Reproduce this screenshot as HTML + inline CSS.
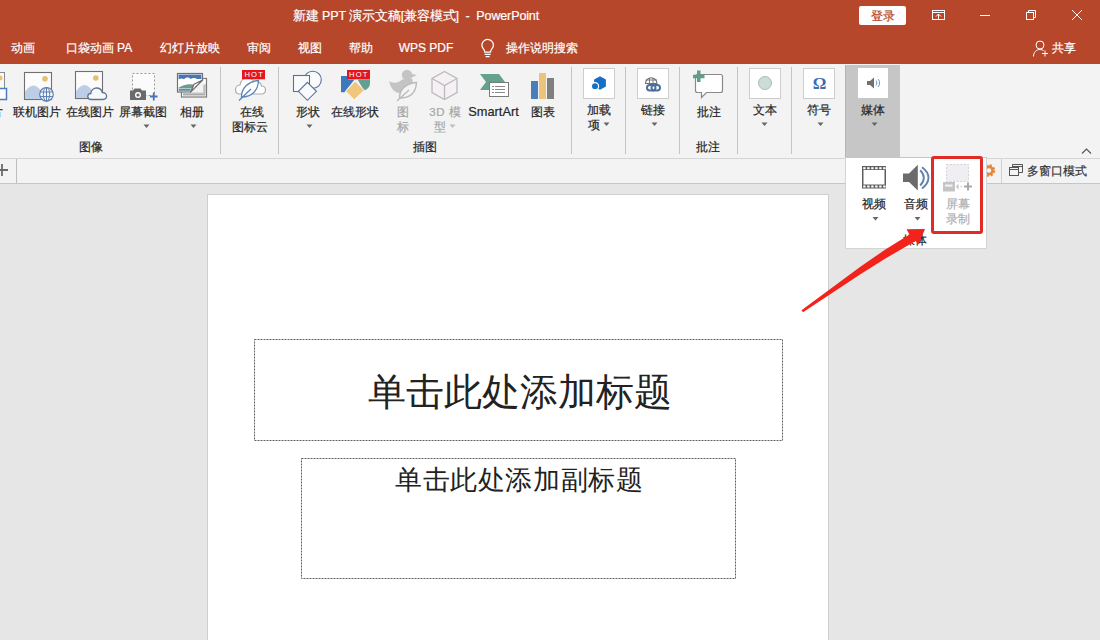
<!DOCTYPE html>
<html><head><meta charset="utf-8">
<style>
*{margin:0;padding:0;box-sizing:border-box}
html,body{width:1100px;height:640px;overflow:hidden;background:#E6E6E6;font-family:"Liberation Sans",sans-serif;position:relative}
.a{position:absolute}
.t{position:absolute;white-space:nowrap;font-size:11.5px;line-height:14px;color:#262626;text-align:center;width:100px;-webkit-text-stroke:0.2px currentColor}
.w{color:#fff}
.g{color:#A6A6A6}
.sep{position:absolute;width:1px;background:#C4C4C4;top:67px;height:87px}
.arr{position:absolute;width:0;height:0;border-left:3.5px solid transparent;border-right:3.5px solid transparent;border-top:4px solid #555}
.box{position:absolute;background:#fff;border:1px solid #CDCDCD}
</style></head><body>

<!-- title bar + tabs -->
<div class="a" style="left:0;top:0;width:1100px;height:64px;background:#B7472A"></div>
<div class="t w" style="left:266px;top:8px;width:300px;font-size:12.5px;line-height:16px;letter-spacing:-0.12px">新建 PPT 演示文稿[兼容模式]&nbsp; - &nbsp;PowerPoint</div>

<!-- login + window buttons -->
<div class="a" style="left:859px;top:6px;width:47px;height:19px;background:#fff;border-radius:2px"></div>
<div class="t" style="left:833px;top:8px;color:#B7472A;font-size:12px;line-height:16px">登录</div>
<svg class="a" style="left:0;top:0" width="1100" height="64">
 <g fill="none" stroke="#fff" stroke-width="1">
  <rect x="932.5" y="10.5" width="12" height="9"/>
  <path d="M932.5 12.5h12M936 16.5l2.5-2.5 2.5 2.5M938.5 14v5"/>
  <path d="M980 15.5h10"/>
  <rect x="1026.5" y="12.5" width="7" height="7"/>
  <path d="M1028.5 12.5v-2h7v7h-2"/>
  <path d="M1072 10l10 10M1082 10l-10 10"/>
  <circle cx="1040" cy="45" r="4"/>
  <path d="M1033.5 56.5c0-4.5 3-7 6.5-7 1.5 0 2.5.4 3.5 1"/>
  <path d="M1042 53.5h6M1045 50.5v6"/>
  <path d="M484.8 52c0-2.5-2.9-3.8-2.9-6.8a5.75 5.75 0 0 1 11.5 0c0 3-2.9 4.3-2.9 6.8z" stroke-width="1.25"/><path d="M484.6 54.3h6M485.6 56.6h4" stroke-width="1.2"/>
 </g>
</svg>
<div class="t w" style="left:1014px;top:40px;font-size:12px;line-height:16px">共享</div>
<!-- tabs -->
<div class="t w" style="left:-27px;top:40px;font-size:12px;line-height:16px">动画</div>
<div class="t w" style="left:49px;top:40px;font-size:12px;line-height:16px">口袋动画 PA</div>
<div class="t w" style="left:140px;top:40px;font-size:12px;line-height:16px">幻灯片放映</div>
<div class="t w" style="left:209px;top:40px;font-size:12px;line-height:16px">审阅</div>
<div class="t w" style="left:260px;top:40px;font-size:12px;line-height:16px">视图</div>
<div class="t w" style="left:311px;top:40px;font-size:12px;line-height:16px">帮助</div>
<div class="t w" style="left:376px;top:40px;font-size:12px;line-height:16px">WPS PDF</div>
<div class="t w" style="left:492px;top:40px;font-size:12px;line-height:16px">操作说明搜索</div>

<!-- ribbon -->
<div class="a" style="left:0;top:64px;width:1100px;height:94px;background:#F3F3F3"></div>
<div class="a" style="left:0;top:158px;width:1100px;height:1px;background:#D5D5D5"></div>
<!-- media highlight -->
<div class="a" style="left:845px;top:65px;width:55px;height:92px;background:#C6C6C6;border-left:1px solid #B4B4B4"></div>
<!-- separators -->
<div class="sep" style="left:220px"></div>
<div class="sep" style="left:278px"></div>
<div class="sep" style="left:571px"></div>
<div class="sep" style="left:625px"></div>
<div class="sep" style="left:679px"></div>
<div class="sep" style="left:737px"></div>
<div class="sep" style="left:791px"></div>
<!-- white boxes -->
<div class="box" style="left:583px;top:68px;width:32px;height:31px"></div>
<div class="box" style="left:637px;top:68px;width:32px;height:31px"></div>
<div class="box" style="left:749px;top:68px;width:32px;height:31px"></div>
<div class="box" style="left:803px;top:68px;width:32px;height:31px"></div>
<div class="box" style="left:858px;top:68px;width:30px;height:30px;border-color:#fff"></div>

<!-- ribbon icons -->
<svg class="a" style="left:0;top:64px" width="1100" height="94" viewBox="0 64 1100 94">
 <!-- partial picture icon -->
 <rect x="-20.5" y="72.5" width="25" height="18" fill="#FAFAFA" stroke="#8C8C8C"/>
 <circle cx="0" cy="78" r="2.5" fill="#E8C27A"/>
 <rect x="-8.5" y="88.5" width="15" height="11" fill="#fff" stroke="#4A7EBB" stroke-width="1.5"/>
 <!-- online picture (globe) -->
 <rect x="24.5" y="72.5" width="27" height="27" fill="#FBFBFB" stroke="#707070" stroke-width="1.1"/>
 <circle cx="45" cy="78.8" r="2.8" fill="#E5BE73"/>
 <path d="M25 99v-7c2-3.5 5.5-6.5 8.5-6.5 3 0 6 3 8.5 6.5l2 7z" fill="#BCCDE5"/>
 <circle cx="46.5" cy="94.3" r="6.8" fill="#F4F8FC" stroke="#5A7DB0" stroke-width="1.2"/>
 <path d="M40 92h13M40 96.6h13M46.5 87.5v13.6" fill="none" stroke="#5A7DB0" stroke-width="1"/>
 <ellipse cx="46.5" cy="94.3" rx="3.2" ry="6.8" fill="none" stroke="#5A7DB0" stroke-width="1"/>
 <!-- online picture (cloud) -->
 <rect x="75.5" y="71.5" width="27" height="27" fill="#FBFBFB" stroke="#707070" stroke-width="1.1"/>
 <circle cx="95.8" cy="78" r="2.8" fill="#E5BE73"/>
 <path d="M76 98v-6.5c2-3.5 5.5-6.5 8.5-6.5 3 0 6 3 8.5 6.5l2 6.5z" fill="#BCCDE5"/>
 <path d="M91 99.5c-2 0-3.2-1.3-3.2-3 0-1.8 1.4-3 3-3 .3-3.2 2.8-5.5 5.8-5.5 2.8 0 5 1.8 5.7 4.5 2.3 0 4.3 1.6 4.3 3.6 0 2-1.6 3.4-3.6 3.4z" fill="#F5F9FC" stroke="#5F7590" stroke-width="1.3"/>
 <!-- screenshot -->
 <rect x="132.5" y="73.5" width="22" height="22" fill="#FBFBFB" stroke="#9A9A9A" stroke-dasharray="2 2"/>
 <path d="M130 90.5h3l1.5-2h6l1.5 2h4v9.5h-16z" fill="#6B6B6B"/>
 <circle cx="138" cy="95" r="3" fill="#fff"/><circle cx="138" cy="95" r="1.6" fill="#6B6B6B"/>
 <path d="M150 96.5h7.5M153.75 92.5v8" stroke="#4A74B0" stroke-width="1.8"/>
 <!-- album -->
 <rect x="181.5" y="78.5" width="25" height="18.5" fill="#fff" stroke="#7A7A7A" stroke-width="1.2"/>
 <path d="M192 93L205.8 83.5V93z" fill="#BFBFBF"/>
 <rect x="183" y="93.3" width="22.5" height="2.2" fill="#A9A9A9"/>
 <rect x="177.5" y="73.5" width="25" height="18.5" fill="#fff" stroke="#707070" stroke-width="1.2"/>
 <rect x="178.6" y="74.6" width="22.8" height="4.8" fill="#4676B4"/>
 <path d="M178.6 79.5c2-1.5 4-1.5 5.5 0 1.5-2.5 5-2.5 6.5-.5 2-1.5 5-1.5 6.5 0h4.3v5h-22.8z" fill="#fff"/>
 <path d="M178.6 87.8c3.5-2.5 8-3.8 12-3.6 3 .2 6 1.2 8 2.8v1.5h-20z" fill="#6C9C8E"/>
 <rect x="178.6" y="89" width="12" height="1.8" fill="#5B8CB0"/>
 <path d="M190 92.8L203.3 79.2V92.8z" fill="#F3F3F3"/>
 <path d="M190.6 92.2L194 84.3l8.6-4.3z" fill="#fff" stroke="#6A6A6A" stroke-width="1.2" stroke-linejoin="round"/>
 <!-- online icon cloud -->
 <path d="M239.5 94c-2.5 0-4-2-4-4.5s2-4.5 4.5-4.5c.5-4 3.5-7 7.5-7 3 0 5 1.5 6.5 3.5 3-1 7 1 7.5 4.5 2.5 0 4 2 4 4s-1.5 4-4 4z" fill="#fff" stroke="#ABABAB" stroke-width="1.2"/>
 <path d="M241.5 97c0-9 6.5-15.5 17-16.5-.5 10-6.5 16.5-17 16.5z" fill="#fff" stroke="#5A84BC" stroke-width="1.3"/>
 <path d="M239 100.5l12-11.5" stroke="#5A84BC" stroke-width="1.3"/>
 <rect x="242" y="70" width="23" height="9.3" fill="#E3161B"/>
 <text x="254.2" y="77.4" font-family="Liberation Sans" font-size="7.6" fill="#fff" text-anchor="middle" letter-spacing="1.2">HOT</text>
 <!-- shapes -->
 <circle cx="312.7" cy="79.8" r="8.6" fill="#F8FAFC" stroke="#56719A" stroke-width="1.1"/>
 <rect x="293.5" y="75.5" width="16" height="16" fill="#F8FAFC" stroke="#56719A" stroke-width="1.1"/>
 <path d="M307.4 82.3l9 9-9 9-9-9z" fill="#F8FAFC" stroke="#56719A" stroke-width="1.1"/>
 <!-- online shapes -->
 <path d="M341 76h7v3.5h6.5l-10 12.8h-3.5z" fill="#3D78BE"/>
 <path d="M357.5 79.5H370v4.5c-.5 3-2.5 5.5-6 6.5z" fill="#62A096"/>
 <path d="M355.2 81l9.2 9.2-10.2 9.6-8.6-8.6z" fill="#F0C57C" stroke="#fff" stroke-width="0.8"/>
 <rect x="347" y="70" width="23" height="9.3" fill="#E3161B"/>
 <text x="358.8" y="77.4" font-family="Liberation Sans" font-size="7.6" fill="#fff" text-anchor="middle" letter-spacing="1.2">HOT</text>
 <!-- icons (disabled) -->
 <circle cx="407" cy="75" r="5.2" fill="#C4C4C4"/>
 <path d="M410 73.5l7 1.5-6 3z" fill="#C4C4C4"/>
 <path d="M389 81c3 2.5 9 2.5 13-1.5l10-1c2.5 6 0 14-9 15-8 .5-12.5-5-14-12.5z" fill="#C4C4C4"/>
 <path d="M399.5 98c0-8.5 6-14.5 17-15.5-.5 10-6 15.5-17 15.5z" fill="#F4F4F4" stroke="#BBBBBB" stroke-width="1.4"/>
 <path d="M397 101l12-11" stroke="#BBBBBB" stroke-width="1.3"/>
 <!-- 3D model (disabled) -->
 <path d="M444.5 71.5l12.5 7v14l-12.5 7-12.5-7v-14z" fill="#F4F0F4" stroke="#BBBBBB" stroke-width="1.3"/>
 <path d="M432 78.5l12.5 7 12.5-7M444.5 85.5v14" fill="none" stroke="#BBBBBB" stroke-width="1.3"/>
 <!-- smartart -->
 <path d="M480 74h19l6 8-6 8h-19l6-8z" fill="#64A28F"/>
 <rect x="489.5" y="82.5" width="19" height="14" fill="#fff" stroke="#7A7A7A"/>
 <path d="M492 86.5h2M495 86.5h10M492 89.5h2M495 89.5h10M492 92.5h2M495 92.5h10" stroke="#8A8A8A"/>
 <!-- chart -->
 <rect x="531" y="81" width="7" height="18" fill="#4A7EBB"/>
 <rect x="539" y="73" width="7" height="26" fill="#EBC47C"/>
 <rect x="547" y="78" width="7" height="21" fill="#7F7F7F"/>
 <!-- addins -->
 <path d="M600 76.2l5.9 3.4v6.8l-5.9 3.4-5.9-3.4v-6.8z" fill="#1570C8"/>
 <circle cx="595" cy="86.2" r="3.6" fill="#1570C8" stroke="#fff" stroke-width="1.2"/>
 <!-- link -->
 <path d="M645.5 83.5a5.75 5.75 0 0 1 11.5 0z" fill="none" stroke="#6E6E6E" stroke-width="1.1"/>
 <path d="M645.5 80h11.5M649.5 78v5.5M653 78v5.5" fill="none" stroke="#6E6E6E" stroke-width="0.9"/>
 <rect x="647" y="85" width="8.5" height="5.5" rx="2.75" fill="none" stroke="#4D6F9C" stroke-width="2"/>
 <rect x="651.5" y="85" width="8.5" height="5.5" rx="2.75" fill="none" stroke="#4D6F9C" stroke-width="2"/>
 <!-- comment -->
 <path d="M697.5 74.5h23a2 2 0 0 1 2 2v14a2 2 0 0 1-2 2h-14l-5 5v-5h-4a2 2 0 0 1-2-2v-14a2 2 0 0 1 2-2z" fill="#fff" stroke="#8A8A8A" stroke-width="1.2"/>
 <path d="M693 76.5h11.5M698.75 70.5v11.5" stroke="#5E9E8C" stroke-width="3.5"/>
 <!-- text -->
 <circle cx="765" cy="83" r="6.5" fill="#CBDDD6" stroke="#A7BFB6" stroke-width="1"/>
 <!-- symbol -->
 <text x="819.5" y="89" font-family="Liberation Serif" font-weight="bold" font-size="17" fill="#3E6DAF" text-anchor="middle">Ω</text>
 <!-- media speaker -->
 <path d="M867 81h3l4-3.5v11l-4-3.5h-3z" fill="#6F6F6F"/>
 <path d="M876 80.5c1 1 1 4 0 5M878 79c2 2 2 6 0 8" fill="none" stroke="#5A84BC" stroke-width="0.9"/>
 <!-- dropdown arrows -->
 <g fill="#666">
  <path d="M143.5 124.5h6l-3 3.5z"/>
  <path d="M190.5 124.5h6l-3 3.5z"/>
  <path d="M306.5 124.5h6l-3 3.5z"/>
  <path d="M603.5 122.5h6l-3 3.5z"/>
  <path d="M651.5 122.5h6l-3 3.5z"/>
  <path d="M761.5 122.5h6l-3 3.5z"/>
  <path d="M817.5 122.5h6l-3 3.5z"/>
  <path d="M871.5 122.5h6l-3 3.5z"/>
 </g>
 <path d="M449.5 124.5h6l-3 3.5z" fill="#BDBDBD"/>
 <path d="M1082 153.5l4.5-4.5 4.5 4.5" fill="none" stroke="#555" stroke-width="1.1"/>
</svg>

<!-- ribbon labels -->
<div class="t" style="left:-59px;top:105px">图片</div>
<div class="t" style="left:-13px;top:105px">联机图片</div>
<div class="t" style="left:40px;top:105px">在线图片</div>
<div class="t" style="left:93px;top:105px">屏幕截图</div>
<div class="t" style="left:142px;top:105px">相册</div>
<div class="t" style="left:41px;top:140px">图像</div>
<div class="t" style="left:202px;top:105px">在线</div>
<div class="t" style="left:200px;top:120px">图标云</div>
<div class="t" style="left:258px;top:105px">形状</div>
<div class="t" style="left:305px;top:105px">在线形状</div>
<div class="t g" style="left:353px;top:105px">图</div>
<div class="t g" style="left:353px;top:120px">标</div>
<div class="t g" style="left:395.5px;top:105px;letter-spacing:0.6px">3D 模</div>
<div class="t g" style="left:390px;top:120px">型</div>
<div class="t" style="left:443.5px;top:104.5px;font-size:12.8px">SmartArt</div>
<div class="t" style="left:493px;top:105px">图表</div>
<div class="t" style="left:375px;top:140px">插图</div>
<div class="t" style="left:549px;top:103px">加载</div>
<div class="t" style="left:544px;top:118px">项</div>
<div class="t" style="left:603px;top:103px">链接</div>
<div class="t" style="left:659px;top:105px">批注</div>
<div class="t" style="left:658px;top:140px">批注</div>
<div class="t" style="left:715px;top:103px">文本</div>
<div class="t" style="left:769px;top:103px">符号</div>
<div class="t" style="left:823px;top:103px">媒体</div>
<!-- toolbar strip -->
<div class="a" style="left:0;top:159px;width:1100px;height:24px;background:#F3F3F3"></div>
<div class="a" style="left:0;top:183px;width:1100px;height:1px;background:#C6C6C6"></div>

<!-- toolbar strip items -->
<svg class="a" style="left:0;top:158px" width="1100" height="26" viewBox="0 158 1100 26">
 <path d="M-4 170h12M2 164v12" stroke="#6A6A6A" stroke-width="1.8"/>
 <path d="M16.5 159v24" stroke="#BDBDBD"/>
 <path d="M1001.5 159v24" stroke="#D0D0D0"/>
 <g fill="none" stroke="#555" stroke-width="1">
  <rect x="1009.5" y="167.5" width="9" height="8"/>
  <path d="M1009.5 169.5h9M1012.5 167.5v-3h10v8h-4M1012.5 166.5h10"/>
 </g>
 <circle cx="989" cy="170.5" r="3.6" fill="none" stroke="#E3873A" stroke-width="2.6"/><circle cx="989" cy="170.5" r="5.3" fill="none" stroke="#E3873A" stroke-width="2" stroke-dasharray="2.2 1.96"/>
</svg>
<div class="t" style="left:1017px;top:163px;width:80px;font-size:12px;line-height:16px;color:#333">多窗口模式</div>

<!-- slide -->
<div class="a" style="left:207px;top:194px;width:622px;height:460px;background:#fff;border:1px solid #CFCFCF"></div>
<svg class="a" style="left:0;top:0" width="1100" height="640"><g fill="none" stroke="#606060" stroke-width="1" stroke-dasharray="2 1">
 <rect x="254.5" y="339.5" width="528" height="101"/>
 <rect x="301.5" y="458.5" width="434" height="120"/>
</g></svg>
<div class="t" style="left:319.5px;top:371.5px;width:400px;font-family:'Liberation Serif',serif;font-size:38px;line-height:40px;color:#222;-webkit-text-stroke:0">单击此处添加标题</div>
<div class="t" style="left:319.3px;top:465px;width:400px;font-family:'Liberation Serif',serif;font-size:27px;letter-spacing:0.6px;line-height:30px;color:#222;-webkit-text-stroke:0">单击此处添加副标题</div>


<!-- media popup -->
<div class="a" style="left:845px;top:157px;width:142px;height:92px;background:#fff;border:1px solid #D4D4D4;border-top-color:#C6C6C6"></div>
<svg class="a" style="left:845px;top:156px" width="145" height="95" viewBox="845 156 145 95">
 <!-- film -->
 <rect x="862" y="166" width="24" height="22.5" fill="#5E5E5E"/>
 <rect x="863.5" y="170" width="21" height="14.5" fill="#fff"/>
 <g fill="#fff"><rect x="863.2" y="167.2" width="2.4" height="2"/><rect x="867.2" y="167.2" width="2.4" height="2"/><rect x="871.2" y="167.2" width="2.4" height="2"/><rect x="875.2" y="167.2" width="2.4" height="2"/><rect x="879.2" y="167.2" width="2.4" height="2"/><rect x="883.2" y="167.2" width="2.4" height="2"/><rect x="863.2" y="185.5" width="2.4" height="2"/><rect x="867.2" y="185.5" width="2.4" height="2"/><rect x="871.2" y="185.5" width="2.4" height="2"/><rect x="875.2" y="185.5" width="2.4" height="2"/><rect x="879.2" y="185.5" width="2.4" height="2"/><rect x="883.2" y="185.5" width="2.4" height="2"/></g>
 <!-- speaker -->
 <path d="M903 173.5h6l8.8-8.8v25.8l-8.8-8.5h-6z" fill="#6B6B6B"/>
 <path d="M920.2 170.2c2.6 2.5 3.6 5 3.6 7.6s-1 5.2-3.6 7.7M922 167.2c4.3 3.2 6.5 6.5 6.5 10.5s-2.2 7.4-6.5 10.7" fill="none" stroke="#6283AE" stroke-width="1.9"/>
 <!-- screen record disabled -->
 <rect x="946.5" y="164.5" width="22" height="17" fill="#F0EEF2" stroke="#D2D2D2" stroke-dasharray="2 1.5"/>
 <rect x="943" y="182" width="12" height="9.5" fill="#C4C4C4"/>
 <rect x="945" y="184.5" width="7.5" height="2.2" fill="#F2F2F2"/>
 <path d="M956 186.5l2.5-3v6.5z" fill="#C4C4C4"/>
 <rect x="960.5" y="186" width="1.2" height="1.2" fill="#C4C4C4"/>
 <path d="M964 186.5h8M968 182.5v8" stroke="#A9A9A9" stroke-width="2"/>
 <g fill="#666">
  <path d="M872.5 217h6l-3 3.5z"/>
  <path d="M914.5 217h6l-3 3.5z"/>
 </g>
</svg>
<div class="t" style="left:824px;top:197px">视频</div>
<div class="t" style="left:866px;top:197px">音频</div>
<div class="t g" style="left:908px;top:197px;color:#B0B0B0">屏幕</div>
<div class="t g" style="left:908px;top:212px;color:#B0B0B0">录制</div>
<div class="t" style="left:865px;top:233px">媒体</div>
<!-- red highlight box -->
<div class="a" style="left:931px;top:156px;width:52px;height:78px;border:3px solid #E22B25;border-radius:3px"></div>
<!-- red arrow -->
<svg class="a" style="left:0;top:0" width="1100" height="640">
 <path d="M801.5 310.3 L860 267 L885 249.7 L909.5 234.5 L906.5 229.2 L925 229 L918.5 244.5 L915.5 241 L885 258.75 L860 274.4 L803 312.3z" fill="#F2231B"/>
</svg>

</body></html>
